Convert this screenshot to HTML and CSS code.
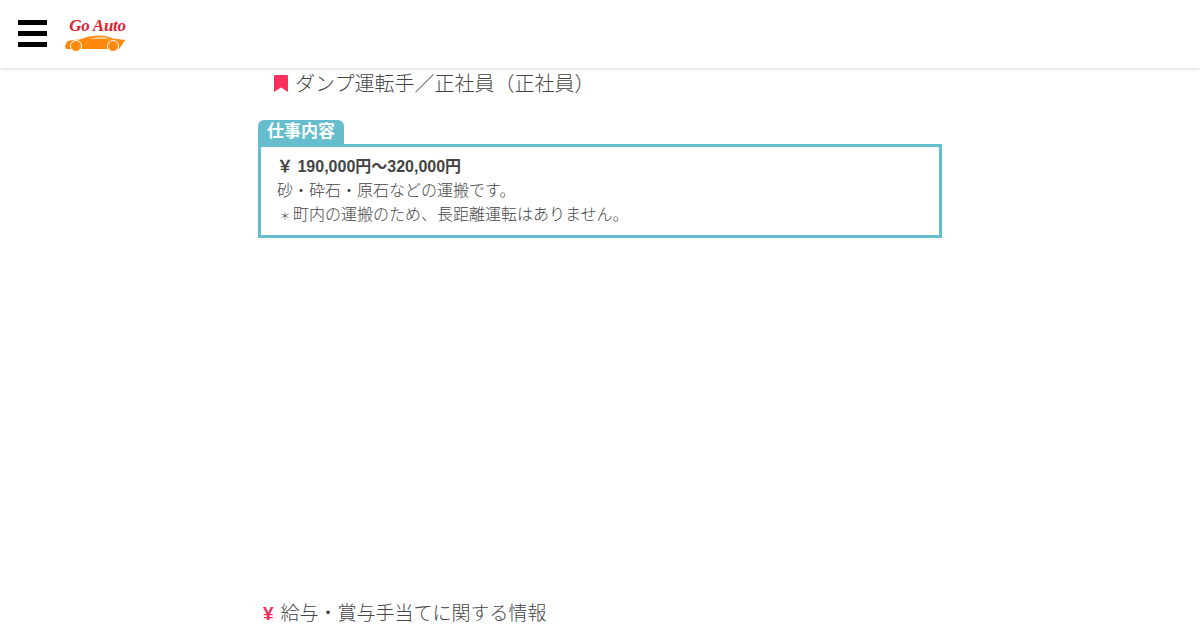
FILE: index.html
```html
<!DOCTYPE html>
<html lang="ja">
<head>
    <meta charset="UTF-8">
    <title>ダンプ運転手／正社員（正社員）</title>
    <link rel="stylesheet" href="styles.css">
</head>
<body>
    <header class="site-header">
        <div class="menu-btn"><span></span><span></span><span></span></div>
        <div class="logo">
            <div class="logo-text">Go Auto</div>
            <svg class="logo-car" width="60" height="17" viewBox="0 0 60 17">
                <path d="M0 11 L2 6.500 Q5 5 15 4.500 Q24 0.500 34 0.500 Q42 0.500 48 3.500 L60 5 L57 10 L54 14 L18 14 L1 14 Z" fill="#ff8a0d"/>
                <path d="M24 4 Q33 1.300 40 2 L45 4 Z" fill="#ffc98c"/>
                <circle cx="11" cy="11" r="5.500" fill="#ff8a0d" stroke="#fff" stroke-width="1"/>
                <circle cx="48" cy="11" r="5.500" fill="#ff8a0d" stroke="#fff" stroke-width="1"/>
            </svg>
        </div>
    </header>

    <main class="content">
        <h2 class="job-title">
            <svg class="bookmark" width="14" height="17" viewBox="0 0 14 17"><path d="M0 1 Q0 0 1 0 H13 Q14 0 14 1 V17 L7 12.500 L0 17 Z"/></svg>
            ダンプ運転手／正社員（正社員）
        </h2>

        <section class="job-box">
            <div class="box-label">仕事内容</div>
            <div class="box-body">
                <strong>￥ 190,000円〜320,000円</strong><br>
                砂・砕石・原石などの運搬です。<br>
                <span class="mark">＊</span>町内の運搬のため、長距離運転はありません。
            </div>
        </section>

        <div class="ad-space"></div>

        <h2 class="salary-title"><span class="yen">¥</span>給与・賞与手当てに関する情報</h2>
    </main>
</body>
</html>
```

FILE: styles.css
```css
html, body {
    height: 630px;
    overflow: hidden;
}
body {
    margin: 0;
    font-family: "Liberation Sans", "Noto Sans CJK JP", sans-serif;
    color: #444;
    font-size: 16px;
    font-weight: 300;
    line-height: 24px;
    background-color: #fff;
}
.site-header {
    height: 68px;
    display: flex;
    align-items: center;
    padding-left: 18px;
    box-shadow: 0 1px 4px rgba(0, 0, 0, 0.16);
}
.menu-btn {
    width: 29px;
    display: flex;
    flex-direction: column;
    gap: 5.500px;
    margin: -1px 18px 0 0;
}
.menu-btn span {
    display: block;
    height: 5.500px;
    background-color: #000;
}
.logo {
    width: 60px;
    display: flex;
    flex-direction: column;
    align-items: center;
    margin-top: 1px;
}
.logo-text {
    font-family: "Liberation Serif", serif;
    font-style: italic;
    font-weight: bold;
    font-size: 17px;
    line-height: 18px;
    letter-spacing: -0.3px;
    white-space: nowrap;
    color: #e3202c;
    margin-left: 5px;
}
.logo-car {
    display: block;
}
.content {
    width: 684px;
    margin: 0 auto;
}
.job-title {
    margin: 0;
    padding: 3px 0 0 16px;
    font-size: 20px;
    font-weight: 300;
    line-height: 26px;
    display: flex;
    align-items: center;
    gap: 7px;
}
.bookmark {
    fill: #fb2f5b;
    margin-top: -2px;
}
.job-box {
    margin-top: 23px;
}
.box-label {
    display: inline-block;
    vertical-align: top;
    height: 24px;
    padding: 0 9px;
    font-size: 17px;
    font-weight: bold;
    color: #fff;
    background-color: #65bdcd;
    border-radius: 6px 6px 0 0;
}
.box-body {
    border: 3px solid #65bdcd;
    padding: 8px 16px;
}
.box-body strong {
    font-weight: bold;
}
.mark {
    display: inline-block;
    width: 16px;
    text-align: center;
    font-size: 11px;
    line-height: 1;
}
.ad-space {
    height: 363px;
}
.salary-title {
    margin: 0;
    padding-left: 5px;
    font-size: 19px;
    font-weight: 300;
    line-height: 26px;
    display: flex;
    align-items: center;
    gap: 7px;
}
.yen {
    color: #fb2f5b;
    font-weight: bold;
}
```
